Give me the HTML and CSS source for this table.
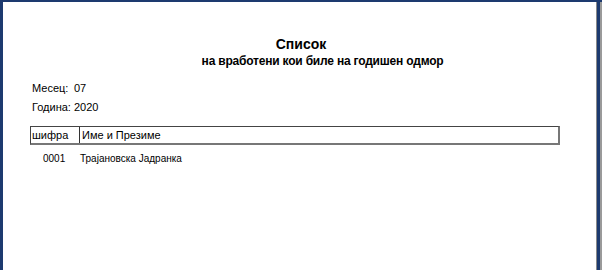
FILE: index.html
```html
<!DOCTYPE html>
<html>
<head>
    <meta charset="UTF-8">
    <title>Список на вработени кои биле на годишен одмор</title>
    <link rel="stylesheet" href="styles.css">
</head>
<body>
    <div class="frame">
        <div class="page">
            <div class="heading">
                <h1 class="title">Список</h1>
                <h2 class="subtitle">на вработени кои биле на годишен одмор</h2>
            </div>

            <div class="params">
                <div class="param"><span class="param-label">Месец:</span><span>07</span></div>
                <div class="param"><span class="param-label">Година:</span><span>2020</span></div>
            </div>

            <div class="grid-head">
                <div class="col-code">шифра</div>
                <div class="col-name">Име и Презиме</div>
            </div>

            <div class="grid-row">
                <div class="col-code cell-code">0001</div>
                <div class="col-name">Трајановска Јадранка</div>
            </div>
        </div>
        <div class="side"></div>
    </div>
</body>
</html>
```

FILE: styles.css
```css
body {
    margin: 0;
    padding: 0;
    font-family: "Liberation Sans", Arial, sans-serif;
    color: #000;
    background: #fff;
}

.frame {
    display: flex;
    height: 270px;
    border-top: 2px solid #1d3a6f;
    border-left: 3px solid #1d3a6f;
    box-sizing: border-box;
    overflow: hidden;
}

.page {
    flex: 1;
    background: #fff;
    border-right: 1px solid #8a8a8a;
}

.side {
    width: 3px;
    background: #1d3a6f;
    border-right: 2px solid #9a9a9a;
}

.heading {
    text-align: center;
    padding-top: 34px;
}

.title {
    margin: 0;
    font-size: 14px;
    line-height: 16px;
    font-weight: bold;
    padding-left: 3px;
}

.subtitle {
    margin: 2px 0 0 0;
    font-size: 12px;
    line-height: 15px;
    font-weight: bold;
    letter-spacing: -0.2px;
    padding-left: 46px;
}

.params {
    margin-top: 9px;
    padding-left: 29px;
    font-size: 11px;
}

.param {
    display: flex;
    height: 19px;
    align-items: center;
}

.param-label {
    width: 42px;
}

.grid-head {
    display: flex;
    margin: 10px 0 0 27px;
    width: 527px;
    height: 16px;
    border: 1px solid #444;
    border-right: 2px solid #777;
    border-bottom: 2px solid #777;
    font-size: 11px;
    line-height: 16px;
}

.grid-head .col-code {
    width: 47px;
    padding-left: 1px;
    border-right: 1px solid #333;
}

.grid-head .col-name {
    padding-left: 2px;
}

.grid-row {
    display: flex;
    margin: 7px 0 0 27px;
    font-size: 10px;
    line-height: 14px;
}

.grid-row .col-code {
    width: 48px;
}

.cell-code {
    padding-left: 13px;
    box-sizing: border-box;
}

.grid-row .col-name {
    padding-left: 2px;
}
```
